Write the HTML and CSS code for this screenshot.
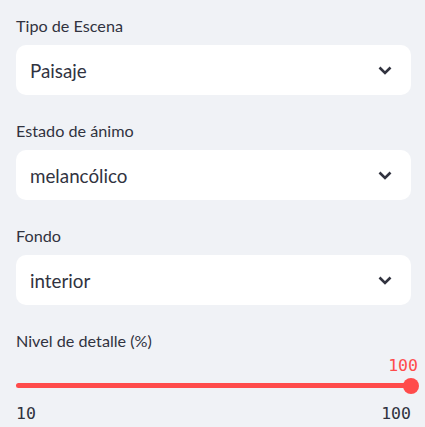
FILE: index.html
```html
<!DOCTYPE html>
<html lang="es">
<head>
<meta charset="utf-8">
<link rel="stylesheet" href="styles.css">
</head>
<body>
<div class="sidebar">
  <div class="widget">
    <label class="label">Tipo de Escena</label>
    <div class="select">
      <span class="select-value">Paisaje</span>
      <svg class="chev" width="14" height="9" viewBox="0 0 14 9"><path d="M1.5 1.5 L7 7 L12.5 1.5" fill="none" stroke="#31333f" stroke-width="2.6" stroke-linecap="butt" stroke-linejoin="miter"/></svg>
    </div>
  </div>
  <div class="widget">
    <label class="label">Estado de ánimo</label>
    <div class="select">
      <span class="select-value">melancólico</span>
      <svg class="chev" width="14" height="9" viewBox="0 0 14 9"><path d="M1.5 1.5 L7 7 L12.5 1.5" fill="none" stroke="#31333f" stroke-width="2.6" stroke-linecap="butt" stroke-linejoin="miter"/></svg>
    </div>
  </div>
  <div class="widget">
    <label class="label">Fondo</label>
    <div class="select">
      <span class="select-value">interior</span>
      <svg class="chev" width="14" height="9" viewBox="0 0 14 9"><path d="M1.5 1.5 L7 7 L12.5 1.5" fill="none" stroke="#31333f" stroke-width="2.6" stroke-linecap="butt" stroke-linejoin="miter"/></svg>
    </div>
  </div>
  <div class="widget">
    <label class="label">Nivel de detalle (%)</label>
    <div class="slider">
      <div class="slider-value">100</div>
      <div class="track">
        <div class="thumb"></div>
      </div>
      <div class="ticks"><span>10</span><span>100</span></div>
    </div>
  </div>
</div>
</body>
</html>
```
FILE: styles.css
```css
html, body {
  margin: 0;
  padding: 0;
  background: #f0f2f6;
}
body {
  font-family: "Lato", "Noto Sans", sans-serif;
  color: #31333f;
  width: 425px;
  height: 427px;
  overflow: hidden;
}
.sidebar {
  padding: 10px 14px 0 16px;
  display: flex;
  flex-direction: column;
  gap: 20px;
}
.widget {
  display: flex;
  flex-direction: column;
}
.label {
  display: flex;
  align-items: center;
  height: 30px;
  margin-bottom: 5px;
  font-size: 16.2px;
}
.select {
  height: 50px;
  background: #ffffff;
  border-radius: 10px;
  display: flex;
  align-items: center;
  justify-content: space-between;
  padding: 0 19px 0 14px;
  box-sizing: border-box;
}
.select-value {
  font-size: 18.8px;
}
.chev {
  display: block;
}
.slider {
  display: flex;
  flex-direction: column;
}
.slider-value {
  font-family: "DejaVu Sans Mono", monospace;
  font-size: 16.5px;
  color: #ff4b4b;
  text-align: right;
  margin-right: -7px;
  margin-top: -4px;
  height: 20px;
  line-height: 20px;
}
.track {
  position: relative;
  height: 5px;
  background: #ff4b4b;
  border-radius: 3px;
  margin-top: 7px;
}
.thumb {
  position: absolute;
  right: -8px;
  top: 50%;
  width: 16px;
  height: 16px;
  margin-top: -8px;
  border-radius: 50%;
  background: #ff4b4b;
}
.ticks {
  display: flex;
  justify-content: space-between;
  font-family: "DejaVu Sans Mono", monospace;
  font-size: 16.5px;
  margin-top: 16px;
  line-height: 20px;
}
```
